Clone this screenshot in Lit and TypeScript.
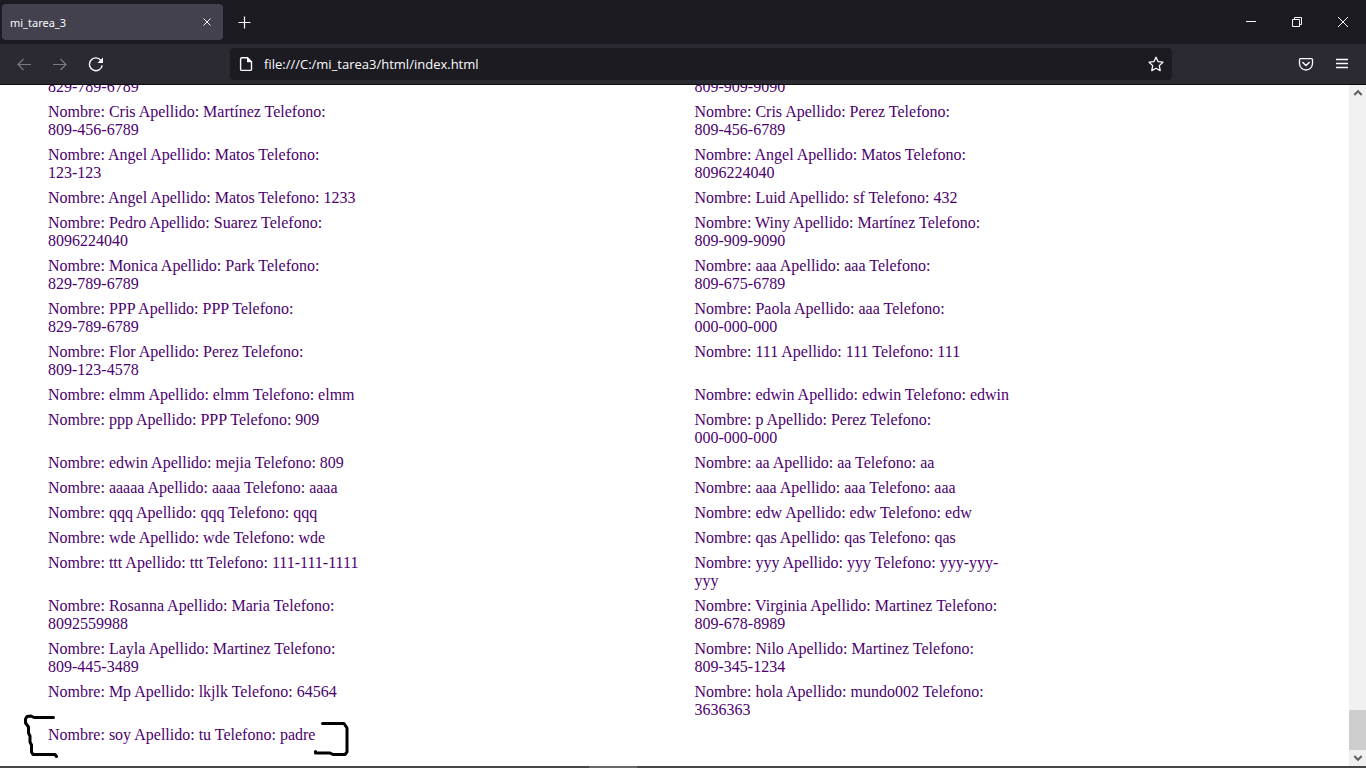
import { LitElement, html, css, svg } from "lit";
import { customElement, state } from "lit/decorators.js";

type Contact = [string, string, string];

// Second lines of the two contacts scrolled partly under the toolbar.
const scrolledPhones = ["829-789-6789", "809-909-9090"];

const contacts: Contact[] = [
  ["Cris", "Martínez", "809-456-6789"],
  ["Cris", "Perez", "809-456-6789"],
  ["Angel", "Matos", "123-123"],
  ["Angel", "Matos", "8096224040"],
  ["Angel", "Matos", "1233"],
  ["Luid", "sf", "432"],
  ["Pedro", "Suarez", "8096224040"],
  ["Winy", "Martínez", "809-909-9090"],
  ["Monica", "Park", "829-789-6789"],
  ["aaa", "aaa", "809-675-6789"],
  ["PPP", "PPP", "829-789-6789"],
  ["Paola", "aaa", "000-000-000"],
  ["Flor", "Perez", "809-123-4578"],
  ["111", "111", "111"],
  ["elmm", "elmm", "elmm"],
  ["edwin", "edwin", "edwin"],
  ["ppp", "PPP", "909"],
  ["p", "Perez", "000-000-000"],
  ["edwin", "mejia", "809"],
  ["aa", "aa", "aa"],
  ["aaaaa", "aaaa", "aaaa"],
  ["aaa", "aaa", "aaa"],
  ["qqq", "qqq", "qqq"],
  ["edw", "edw", "edw"],
  ["wde", "wde", "wde"],
  ["qas", "qas", "qas"],
  ["ttt", "ttt", "111-111-1111"],
  ["yyy", "yyy", "yyy-yyy-yyy"],
  ["Rosanna", "Maria", "8092559988"],
  ["Virginia", "Martinez", "809-678-8989"],
  ["Layla", "Martinez", "809-445-3489"],
  ["Nilo", "Martinez", "809-345-1234"],
  ["Mp", "lkjlk", "64564"],
  ["hola", "mundo002", "3636363"],
  ["soy", "tu", "padre"],
];

// A word joiner after a hyphen keeps a numeric phone on one line.
const keepTogether = (phone: string) => phone.replace(/-(?=\d)/g, "-\u2060");

const icon = (size: number, body: unknown) => html`<svg
  width=${size}
  height=${size}
  viewBox="0 0 ${size} ${size}"
  fill="none"
  stroke="currentColor"
  aria-hidden="true"
>${body}</svg>`;

const icons = {
  close: icon(10, svg`<path d="M1.500 1.500l7 7M8.500 1.500l-7 7" stroke-width="1"/>`),
  plus: icon(13, svg`<path d="M6.500 0.500v12M0.500 6.500h12" stroke-width="1.200"/>`),
  minimize: icon(10, svg`<path d="M0 4.500h10"/>`),
  restore: icon(10, svg`<path d="M0.500 2.500h7v7h-7zM2.500 2.500v-2h7v7h-2"/>`),
  closeWindow: icon(10, svg`<path d="M0 0l10 10M10 0L0 10"/>`),
  back: icon(16, svg`<path d="M15 8.500H1.700M7.500 3L2 8.500 7.500 14" stroke-width="1.200"/>`),
  forward: icon(16, svg`<path d="M1 8.500h13.300M8.500 3l5.500 5.500L8.500 14" stroke-width="1.200"/>`),
  reload: icon(16, svg`<path d="M14.200 9.300A6.400 6.400 0 1 1 12.800 4.200" stroke-width="1.400"/><path d="M15 1.500v5.500H9.500z" fill="currentColor" stroke="none"/>`),
  page: icon(16, svg`<path d="M3.800 1.800h5.700l4 4v7.400a1.200 1.200 0 0 1-1.200 1.200H3.800a1.200 1.200 0 0 1-1.200-1.200V3a1.200 1.200 0 0 1 1.200-1.200z" stroke-width="1.400"/><path d="M9 1.500v4.800h4.800z" fill="currentColor" stroke="none"/>`),
  star: icon(16, svg`<path d="M8 1.200l2 4.400 4.900.6-3.600 3.400.9 5L8 12.200l-4.200 2.400.9-5L1.100 6.200 6 5.600z" stroke-width="1.300" stroke-linejoin="round"/>`),
  pocket: icon(16, svg`<path d="M2.500 2.600h11a1 1 0 0 1 1 1v3.900a6.500 6.500 0 0 1-13 0V3.600a1 1 0 0 1 1-1z" stroke-width="1.300"/><path d="M4.800 6.500L8 9.500l3.200-3" stroke-width="1.500" stroke-linecap="round" stroke-linejoin="round"/>`),
  menu: icon(16, svg`<path d="M2 3.500h12M2 7.500h12M2 11.500h12" stroke-width="1.300"/>`),
  up: icon(10, svg`<path d="M1.300 7L5 3.200 8.700 7" stroke-width="2"/>`),
  down: icon(10, svg`<path d="M1.300 3L5 6.800 8.700 3" stroke-width="2"/>`),
};

@customElement("app-root")
export class AppRoot extends LitElement {
  @state() private address = "file:///C:/mi_tarea3/html/index.html";

  static styles = css`
    :host {
      display: flex;
      flex-direction: column;
      height: 100vh;
      background: #fff;
      font-family: "Open Sans", "Noto Sans", sans-serif;
      color: #fbfbfe;
    }
    button {
      display: flex;
      align-items: center;
      justify-content: center;
      margin: 0;
      padding: 0;
      border: 0;
      background: none;
      color: inherit;
      font: inherit;
    }
    svg {
      display: block;
      flex: none;
    }
    .tabs {
      display: flex;
      flex: none;
      align-items: center;
      height: 44px;
      padding-left: 2px;
      background: #1c1b22;
    }
    .tab {
      display: flex;
      align-items: center;
      width: 221px;
      height: 36px;
      border-radius: 4px;
      background: #42414d;
    }
    .tab-title {
      flex: 1;
      height: 36px;
      padding-left: 8px;
      justify-content: flex-start;
      font-family: "Noto Sans", sans-serif;
      font-size: 11px;
    }
    .tab-close {
      width: 32px;
      height: 24px;
    }
    .new-tab {
      width: 43px;
      height: 36px;
    }
    .window {
      display: flex;
      margin-left: auto;
    }
    .window button {
      width: 46px;
      height: 44px;
    }
    .toolbar {
      display: flex;
      flex: none;
      align-items: center;
      height: 40px;
      padding: 0 6px;
      border-bottom: 1px solid #0c0c0d;
      background: #2b2a33;
    }
    .tool {
      width: 36px;
      height: 32px;
      flex: none;
    }
    .tool:disabled {
      color: #7b7a82;
    }
    .spring {
      flex: 116 1 0;
    }
    .url {
      display: flex;
      flex: 942 1 0;
      align-items: center;
      height: 32px;
      min-width: 0;
      border-radius: 4px;
      background: #1c1b22;
    }
    .url > svg {
      margin: 0 10px 0 8px;
    }
    .url input {
      flex: 1;
      min-width: 0;
      height: 30px;
      margin: 0;
      padding: 0;
      border: 0;
      outline: 0;
      background: none;
      color: inherit;
      font-family: inherit;
      font-size: 13px;
    }
    .url button {
      width: 32px;
      height: 32px;
    }
    .view {
      display: flex;
      flex: 1;
      min-height: 0;
    }
    .page {
      display: flex;
      flex: 1;
      flex-direction: column;
      justify-content: flex-end;
      min-width: 0;
      overflow: hidden;
      padding: 0 8px 22px;
      font-family: "Liberation Serif", "Times New Roman", serif;
      font-size: 16px;
      line-height: 18px;
      color: #4b006e;
    }
    .contacts {
      display: grid;
      grid-template-columns: 1fr 1fr;
      row-gap: 7px;
      margin: 0;
      padding: 0 0 0 40px;
      list-style: none;
    }
    .contact {
      width: 50%;
    }
    .marked {
      position: relative;
    }
    .mark {
      position: absolute;
      left: -28px;
      top: -14px;
      color: #000;
    }
    .scrollbar {
      display: flex;
      flex: none;
      flex-direction: column;
      align-items: center;
      width: 17px;
      background: #f0f0f0;
      color: #606060;
    }
    .scrollbar button {
      width: 17px;
      height: 16px;
    }
    .track {
      display: flex;
      flex: 1;
      flex-direction: column;
      justify-content: flex-end;
      width: 17px;
    }
    .thumb {
      height: 40px;
      background: #cdcdcd;
    }
    .edge {
      display: flex;
      flex: none;
      justify-content: center;
      height: 2px;
      padding-right: 140px;
      background: #47474a;
    }
    .edge-active {
      width: 48px;
      background: #6a6a6c;
    }
  `;

  private renderContact([name, surname, phone]: Contact, index: number) {
    const last = index === contacts.length - 1;
    const text = `Nombre: ${name} Apellido: ${surname} Telefono: ${keepTogether(phone)}`;
    return html`<li class="contact ${last ? "marked" : ""}">${text}${last
        ? html`<svg class="mark" width="330" height="48" viewBox="20 712 330 48" fill="none" stroke="currentColor" stroke-width="3" stroke-linecap="round" stroke-linejoin="round" aria-hidden="true">
            <path d="M53.500 717.500H34L31 716L27 716.500L25.500 719V723L28.500 727V733L30 736V742L31.500 745V752L33 754.500H55L56.500 756.500" />
            <path d="M322.500 723.500H344L347 728V752L345 754.500H333L330 753H315.500V751.500" />
          </svg>`
        : null}</li>`;
  }

  render() {
    return html`
      <header class="tabs">
        <div class="tab">
          <button class="tab-title">mi_tarea_3</button>
          <button class="tab-close" aria-label="Cerrar pestaña">${icons.close}</button>
        </div>
        <button class="new-tab" aria-label="Nueva pestaña">${icons.plus}</button>
        <div class="window">
          <button aria-label="Minimizar">${icons.minimize}</button>
          <button aria-label="Restaurar">${icons.restore}</button>
          <button aria-label="Cerrar">${icons.closeWindow}</button>
        </div>
      </header>
      <nav class="toolbar">
        <button class="tool" disabled aria-label="Atrás">${icons.back}</button>
        <button class="tool" disabled aria-label="Adelante">${icons.forward}</button>
        <button class="tool" aria-label="Recargar">${icons.reload}</button>
        <div class="spring"></div>
        <div class="url">
          ${icons.page}
          <input
            type="text"
            aria-label="Dirección"
            spellcheck="false"
            .value=${this.address}
            @input=${(e: Event) => (this.address = (e.target as HTMLInputElement).value)}
          />
          <button aria-label="Añadir a marcadores">${icons.star}</button>
        </div>
        <div class="spring"></div>
        <button class="tool" aria-label="Guardar en Pocket">${icons.pocket}</button>
        <button class="tool" aria-label="Menú">${icons.menu}</button>
      </nav>
      <div class="view">
        <main class="page">
          <ul class="contacts">
            ${scrolledPhones.map((p) => html`<li class="contact">${keepTogether(p)}</li>`)}
            ${contacts.map((c, i) => this.renderContact(c, i))}
          </ul>
        </main>
        <div class="scrollbar">
          <button aria-label="Subir">${icons.up}</button>
          <div class="track"><div class="thumb"></div></div>
          <button aria-label="Bajar">${icons.down}</button>
        </div>
      </div>
      <div class="edge"><div class="edge-active"></div></div>
    `;
  }
}
